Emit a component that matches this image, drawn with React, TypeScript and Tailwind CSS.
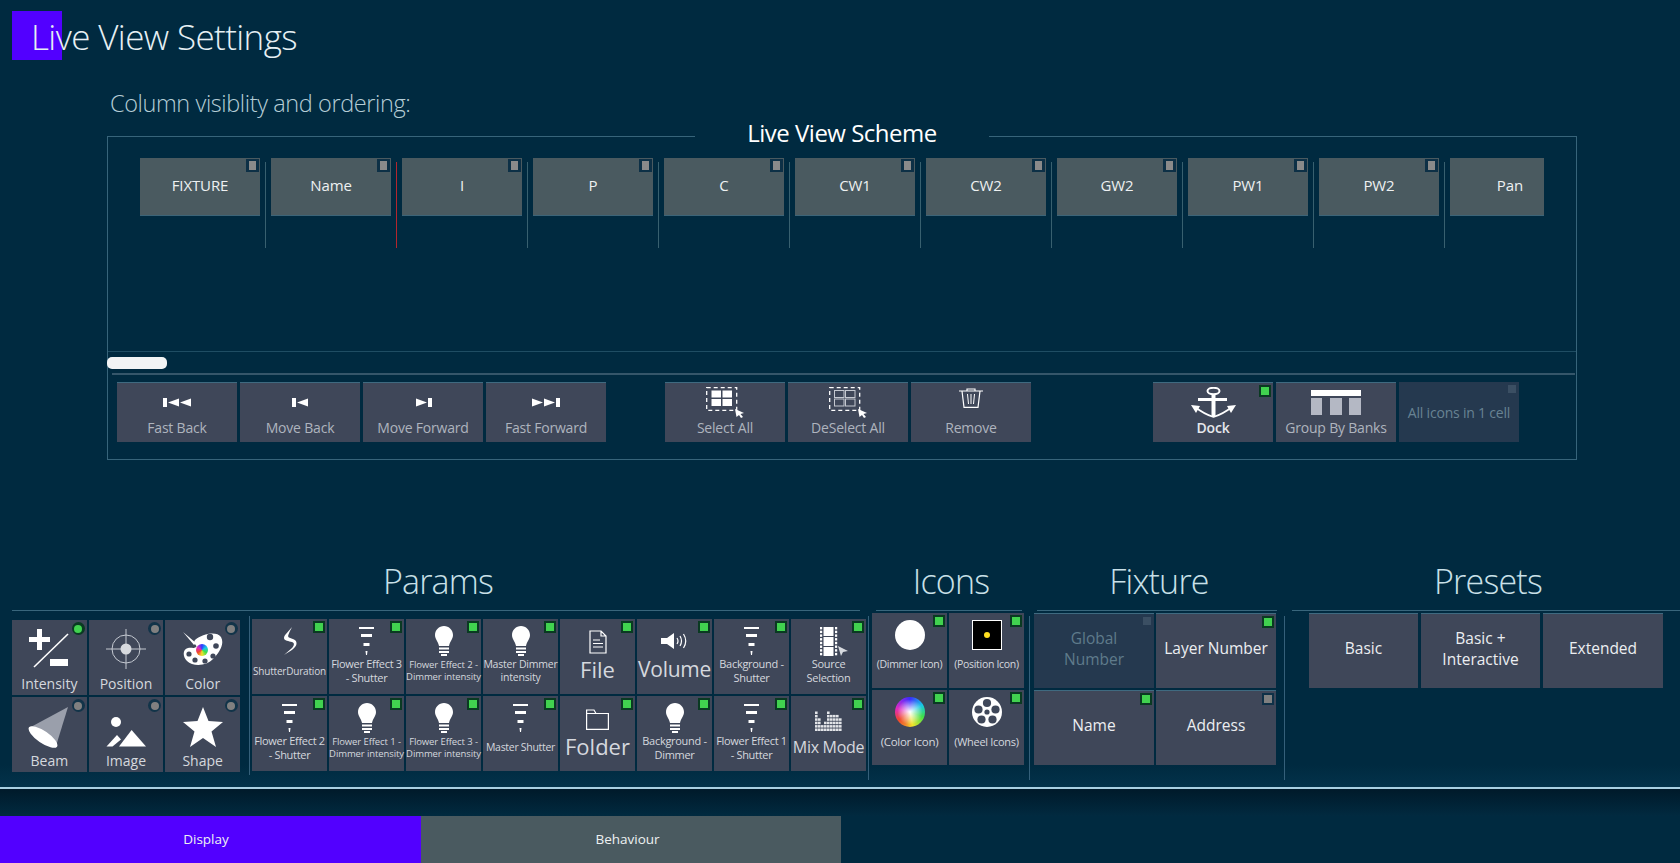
import type { ReactNode } from "react";

type Mark = "on" | "off" | "dim" | "none";

const COLUMNS = ["FIXTURE", "Name", "I", "P", "C", "CW1", "CW2", "GW2", "PW1", "PW2", "Pan"];

function SquareMark({ mark }: { mark: Mark }) {
    if (mark === "none") return null;
    if (mark === "dim") {
        return <span className="absolute top-[3px] right-[3px] w-[8px] h-[8px] bg-[#3b4f63]" />;
    }
    return (
        <span className={`absolute top-[2px] right-[2px] w-[12px] h-[12px] flex items-center justify-center ${mark === "on" ? "bg-[#0a3a22]" : "bg-[#0f3148]"}`}>
            <span className={`w-[8px] h-[8px] ${mark === "on" ? "bg-[#41d24f]" : "bg-[#808080]"}`} />
        </span>
    );
}

function RoundMark({ on }: { on: boolean }) {
    return (
        <span className={`absolute top-[2px] right-[2px] w-[13px] h-[13px] rounded-full flex items-center justify-center ${on ? "bg-[#0a3a22]" : "bg-[#123449]"}`}>
            <span className={`w-[8px] h-[8px] rounded-full ${on ? "bg-[#41d24f]" : "bg-[#808080]"}`} />
        </span>
    );
}

/* ---------- icons ---------- */

const Skip = ({ back, double }: { back?: boolean; double?: boolean }) => (
    <svg width={double ? 28 : 17} height="9" viewBox={double ? "0 0 28 9" : "0 0 17 9"} className={back ? "" : "-scale-x-100"} fill="#fff">
        <rect x="0" y="0" width="4" height="9" />
        <polygon points="5,4.5 16,0.5 16,8.5" />
        {double && <polygon points="17,4.5 28,0.5 28,8.5" />}
    </svg>
);

const SelectGrid = ({ filled }: { filled?: boolean }) => (
    <svg width="38" height="31" viewBox="0 0 38 31" fill="none">
        <rect x="0.7" y="0.7" width="30" height="22.6" stroke="#fff" strokeWidth="1.3" strokeDasharray="4 3" />
        {[[5.5, 3.5], [16.5, 3.5], [5.5, 12], [16.5, 12]].map(([x, y]) => (
            <rect key={`${x}-${y}`} x={x} y={y} width="9.5" height="7" fill={filled ? "#fff" : "none"} stroke={filled ? "none" : "#c4c8d0"} />
        ))}
        <path d="M29 22 L38 26 L34.5 27 L37 30 L35 31 L33 28 L30.5 30 Z" fill="#fff" />
    </svg>
);

const Trash = () => (
    <svg width="24" height="20" viewBox="0 0 24 20" fill="none" stroke="#fff" className="mb-[9px]">
        <path d="M0 3 H24 M8 3 V1 H16 V3" strokeWidth="1.2" />
        <path d="M3 3 L5 19.4 H19 L21 3" strokeWidth="1.2" />
        <path d="M8.5 6 L9.5 16 M12 6 V16 M15.5 6 L14.5 16" strokeWidth="1" />
    </svg>
);

const Anchor = () => (
    <svg width="45" height="31" viewBox="0 0 45 31" fill="none" stroke="#fff">
        <ellipse cx="22.5" cy="4" rx="6" ry="3.2" strokeWidth="2" />
        <rect x="7" y="11" width="29" height="3" fill="#fff" stroke="none" />
        <rect x="20.5" y="7" width="4" height="23" fill="#fff" stroke="none" />
        <path d="M4 20 Q13 27 22.5 30 Q32 27 41 20" strokeWidth="1.6" />
        <polygon points="0,18 9,19 5,26" fill="#fff" stroke="none" />
        <polygon points="45,18 36,19 40,26" fill="#fff" stroke="none" />
    </svg>
);

const Banks = () => (
    <svg width="50" height="25" viewBox="0 0 50 25">
        <rect x="0" y="0" width="50" height="6" fill="#fff" />
        <rect x="0" y="8" width="11" height="17" fill="#b4b8c4" />
        <rect x="19" y="8" width="12" height="17" fill="#b4b8c4" />
        <rect x="38" y="8" width="12" height="17" fill="#b4b8c4" />
    </svg>
);

const PlusMinus = () => (
    <svg width="40" height="40" viewBox="0 0 40 40" fill="#fff">
        <rect x="0" y="8" width="21" height="5" />
        <rect x="8" y="0" width="5" height="21" />
        <rect x="21" y="30" width="18" height="7" />
        <line x1="39" y1="5" x2="5" y2="38" stroke="#fff" strokeWidth="1.6" />
    </svg>
);

const Crosshair = () => (
    <svg width="40" height="40" viewBox="0 0 40 40" fill="none" stroke="#c4c9d1">
        <circle cx="20" cy="20" r="14" />
        <path d="M0 20 H40 M20 0 V40" />
        <circle cx="20" cy="20" r="5.5" fill="#d6d9de" stroke="none" />
    </svg>
);

const Palette = () => (
    <div className="relative w-[40px] h-[36px]">
        <svg width="40" height="36" viewBox="0 0 40 36">
            <path d="M0 1 L13 12 L11 14 Z" fill="#fff" />
            <path d="M12 9 C20 2 34 0 38 6 C42 13 36 22 30 28 C24 35 10 36 4 30 C-1 25 0 18 5 17 C9 16 10 18 13 16 C15 14 9 13 12 9 Z" fill="#fff" />
            {[[27, 6, 3.2], [33, 15, 2.8], [30, 25, 2.6], [22, 30, 2.6], [12, 29, 2.6], [6, 23, 2.6]].map(([x, y, r]) => (
                <circle key={`${x}-${y}`} cx={x} cy={y} r={r} fill="#3f4759" />
            ))}
        </svg>
        <span className="absolute left-[13px] top-[13px] w-[12px] h-[12px] rounded-full bg-[conic-gradient(#2e3bff,#19c8e6,#3fe04a,#f2e52b,#f0462c,#e02bc0,#2e3bff)]" />
    </div>
);

const Beam = () => (
    <svg width="42" height="44" viewBox="0 0 42 44" className="shrink-0">
        <polygon points="40,3 1,24 28,42" fill="#9a9fab" />
        <ellipse cx="15" cy="33" rx="17" ry="6" transform="rotate(34.5 15 33)" fill="#fff" />
    </svg>
);

const Picture = () => (
    <svg width="40" height="30" viewBox="0 0 40 30" fill="#fff" className="mt-[13px]">
        <circle cx="10" cy="5" r="5" />
        <polygon points="0.5,29.6 11,18 15,22.5 6.5,29.6" />
        <polygon points="13,29.6 25.6,13 40,29.6" />
    </svg>
);

const Star = () => (
    <svg width="40" height="40" viewBox="0 0 40 40" fill="#fff" className="mt-[2px]">
        <polygon points="20,0 25.5,14 40,15 28.5,24.5 33,40 20,31 7,40 11.5,24.5 0,15 14.5,14" />
    </svg>
);

const Bolt = () => (
    <svg width="14" height="28" viewBox="0 0 14 28" fill="#fff">
        <path d="M9 0 C6 4 1 8 1 11 C1 14 6 14 9 15 C12 16 11 19 9 21 L1 28 C6 25 13 21 13.5 17 C14 12 9 12 6 10.5 C4 9.5 6 6 9 0 Z" />
    </svg>
);

const Flower = () => (
    <svg width="15" height="28" viewBox="0 0 15 28" fill="#fff">
        <rect x="0" y="0" width="15" height="2" />
        <rect x="2" y="7" width="11" height="3" />
        <rect x="4.5" y="16" width="6" height="3" />
        <polygon points="6.5,24 8.5,24 8,28 7,28" />
    </svg>
);

const Bulb = () => (
    <svg width="18" height="30" viewBox="0 0 18 30" fill="#fff">
        <path d="M9 0 C4 0 0 4 0 9 C0 13 3 15 4 20 H14 C15 15 18 13 18 9 C18 4 14 0 9 0 Z" />
        <rect x="4" y="21.5" width="10" height="2" />
        <rect x="4" y="25" width="10" height="2" />
        <rect x="6" y="28" width="6" height="2" />
    </svg>
);

const FileIcon = () => (
    <svg width="18" height="24" viewBox="0 0 18 24" fill="none" stroke="#fff" strokeWidth="1.2" className="mt-[2px]">
        <path d="M1 1 H12 L17 6 V23 H1 Z M12 1 V6 H17" />
        <path d="M4 10 H11 M4 13.5 H14 M4 17 H14" />
    </svg>
);

const Speaker = () => (
    <svg width="27" height="16" viewBox="0 0 27 16" fill="none" stroke="#fff" className="mb-[1px]">
        <polygon points="0,5 6,5 13,0 13,16 6,11 0,11" fill="#fff" stroke="none" />
        <path d="M16 5 Q18 8 16 11 M19 3 Q22 8 19 13 M22.5 1 Q27 8 22.5 15" strokeWidth="1.2" />
    </svg>
);

const Film = () => (
    <svg width="28" height="29" viewBox="0 0 28 29" fill="#fff" className="ml-[11px]">
        <rect x="3.5" y="0" width="10" height="9" />
        <rect x="3.5" y="10" width="10" height="9" />
        <rect x="3.5" y="20" width="10" height="9" />
        {[0, 1, 2, 3, 4, 5, 6, 7].map((i) => (
            <g key={i}>
                <rect x="0" y={i * 3.7} width="2.2" height="2.4" />
                <rect x="15" y={i * 3.7} width="2.2" height="2.4" />
            </g>
        ))}
        <polygon points="18,19 28,24 23,25 21,29" fill="#d8dbe0" />
    </svg>
);

const Folder = () => (
    <svg width="23" height="21" viewBox="0 0 23 21" fill="none" stroke="#fff" strokeWidth="1.2" className="mt-[3px]">
        <path d="M0.6 20.4 V1 H8 L10 4.5 H22.4 V20.4 Z M0.6 4.5 H10" />
    </svg>
);

const EQ_LEVELS = [6, 4, 2, 3, 6, 5, 5, 5, 4];

const Equalizer = () => (
    <svg width="27" height="22" viewBox="0 0 27 22" fill="#e2e4e8" className="mt-[3px]">
        {EQ_LEVELS.map((n, col) =>
            Array.from({ length: n }).map((_, row) => (
                <rect key={`${col}-${row}`} x={col * 3} y={19.5 - row * 3.4} width="2.6" height="2.5" />
            )),
        )}
    </svg>
);

const PositionIcon = () => (
    <div className="w-[30px] h-[30px] bg-black border border-white flex items-center justify-center">
        <span className="w-[6px] h-[6px] rounded-full bg-[#ffdf20]" />
    </div>
);

const Wheel = () => (
    <svg width="30" height="30" viewBox="0 0 30 30">
        <circle cx="15" cy="15" r="15" fill="#fff" />
        {[[15, 6], [23.5, 12.5], [20.5, 22.5], [9.5, 22.5], [6.5, 12.5]].map(([x, y]) => (
            <circle key={`${x}-${y}`} cx={x} cy={y} r="4.1" fill="#3f4759" />
        ))}
        <circle cx="15" cy="15" r="2.6" fill="#3f4759" />
    </svg>
);

/* ---------- buttons ---------- */

function ColumnItem({ name }: { name: string }) {
    return (
        <div className="w-[131px] shrink-0 flex items-start">
            <div className="relative w-[120px] h-[58px] shrink-0 bg-[#4a5a60] border-b border-[#3c6478] pb-[3px] flex items-center justify-center text-[15px] tracking-[-0.1px] text-[#eef1f2]">
                {name}
                <span className="absolute top-[1px] right-[1px] w-[13px] h-[13px] bg-[#0d3046] flex items-center justify-center">
                    <span className="w-[7px] h-[9px] bg-[#8a8a8a]" />
                </span>
            </div>
            <div className={`ml-[5px] mt-[4px] w-px h-[86px] ${name === "Name" ? "bg-[#b3262e]" : "bg-[#38606f]"}`} />
        </div>
    );
}

function ToolButton({ label, icon, mark = "none", bold }: { label: string; icon: ReactNode; mark?: Mark; bold?: boolean }) {
    return (
        <div className="relative w-[120px] h-[60px] bg-[#3f4759] border-t border-[#3f6a80] flex flex-col items-center pt-[4px]">
            <div className="h-[31px] flex items-center justify-center">{icon}</div>
            <div className={`h-[18px] flex items-center text-[14px] tracking-[-0.2px] ${bold ? "font-semibold text-[#e6e8ec]" : "text-[#aeb4be]"}`}>{label}</div>
            <SquareMark mark={mark} />
        </div>
    );
}

function Tile({ label, icon, text, on, round, tall }: { label: string; icon: ReactNode; text: string; on?: boolean; round?: boolean; tall?: boolean }) {
    return (
        <div className="relative h-[75px] bg-[#3f4759] flex flex-col items-center pt-[7px]">
            <div className={`${tall ? "h-[43px]" : "h-[30px]"} flex items-center justify-center shrink-0`}>{icon}</div>
            <div className={`h-[30px] w-full flex items-center justify-center text-center whitespace-pre text-[#d5d8de] ${tall ? "mt-[1px]" : ""} ${text}`}>{label}</div>
            {round ? <RoundMark on={!!on} /> : <SquareMark mark="on" />}
        </div>
    );
}

function TextTile({ label, mark = "none", dim }: { label: string; mark?: Mark; dim?: boolean }) {
    return (
        <div className={`relative h-[75px] border-t border-[#3f6a80] pb-[5px] flex items-center justify-center text-center text-[15.5px] leading-[21px] whitespace-pre-line ${dim ? "bg-[#25394f] text-[#5f7b8b]" : "bg-[#3f4759] text-[#eceef1]"}`}>
            {label}
            <SquareMark mark={mark} />
        </div>
    );
}

const Heading = ({ title, className }: { title: string; className: string }) => (
    <div className={`h-[51px] pb-[8px] pl-[4px] border-b border-[#39667c] flex items-center justify-center text-[34px] font-light tracking-[-0.8px] text-[#c9e0e8] ${className}`}>{title}</div>
);

const Sep = () => <div className="mt-[56px] w-px h-[164px] bg-[#35607a] shrink-0" />;

const SMALL = "text-[9.5px] leading-[12px] tracking-[-0.1px]";
const MID = "text-[11px] leading-[14px] tracking-[-0.3px]";
const BIG = "text-[22px] pb-[4px]";

export default function App() {
    return (
        <div className="relative w-[1680px] h-[863px] overflow-hidden bg-[#002a40] font-['Open_Sans',sans-serif] flex flex-col">
            {/* focus highlight behind the title */}
            <div className="absolute left-[12px] top-[11px] w-[50px] h-[49px] bg-[#5200ff]" />

            <div className="relative h-[76px] pb-[2px] pl-[31px] flex items-center text-[35px] font-light tracking-[-0.6px] text-[#e6f0f4]">Live View Settings</div>
            <div className="mt-[14px] ml-[110px] h-[30px] pb-[2px] flex items-center text-[23.5px] font-light tracking-[-0.4px] text-[#b5cdd6]">Column visiblity and ordering:</div>

            <fieldset className="mt-px ml-[107px] w-[1470px] h-[339px] border border-[#37647a]">
                <legend className="mx-auto w-[294px] h-[30px] pb-[7px] flex items-center justify-center text-[24px] tracking-[-0.5px] text-white">Live View Scheme</legend>
                <div className="pt-[7px] h-[201px] border-b border-[#1f4d63]">
                    <div className="ml-[32px] w-[1404px] flex overflow-hidden">
                        {COLUMNS.map((c) => (
                            <ColumnItem key={c} name={c} />
                        ))}
                    </div>
                </div>
                <div className="mt-[5px] -ml-px w-[60px] h-[12px] rounded-[5px] bg-[#f2f4f5]" />
                <div className="mt-[4px] ml-[4px] mr-px h-[2px] bg-[#35566a]" />
                <div className="mt-[7px] ml-[9px] flex items-start">
                    <div className="flex gap-[3px]">
                        <ToolButton label="Fast Back" icon={<Skip back double />} />
                        <ToolButton label="Move Back" icon={<Skip back />} />
                        <ToolButton label="Move Forward" icon={<Skip />} />
                        <ToolButton label="Fast Forward" icon={<Skip double />} />
                    </div>
                    <div className="ml-[59px] flex gap-[3px]">
                        <ToolButton label="Select All" icon={<SelectGrid filled />} />
                        <ToolButton label="DeSelect All" icon={<SelectGrid />} />
                        <ToolButton label="Remove" icon={<Trash />} />
                    </div>
                    <div className="ml-[122px] flex gap-[3px]">
                        <ToolButton label="Dock" icon={<Anchor />} mark="on" bold />
                        <ToolButton label="Group By Banks" icon={<Banks />} />
                        <div className="relative w-[120px] h-[60px] bg-[#25394f] flex items-center justify-center text-[14px] tracking-[-0.2px] text-[#688393]">
                            All icons in 1 cell
                            <SquareMark mark="dim" />
                        </div>
                    </div>
                </div>
            </fieldset>

            <div className="mt-[100px] h-[227px] flex items-start bg-gradient-to-b from-[#002a40] from-[90%] to-[#03324a]">
                <div className="ml-[12px] w-[856px] shrink-0">
                    <Heading title="Params" className="w-[848px]" />
                    <div className="flex items-start">
                        <div className="mt-[9px] w-[228px] grid grid-cols-3 gap-[2px]">
                            <Tile label="Intensity" tall round on icon={<PlusMinus />} text="text-[14px]" />
                            <Tile label="Position" tall round icon={<Crosshair />} text="text-[14px]" />
                            <Tile label="Color" tall round icon={<Palette />} text="text-[14px]" />
                            <Tile label="Beam" tall round icon={<Beam />} text="text-[14px]" />
                            <Tile label="Image" tall round icon={<Picture />} text="text-[14px]" />
                            <Tile label="Shape" tall round icon={<Star />} text="text-[14px]" />
                        </div>
                        <div className="ml-[9px] mt-[5px] w-px h-[159px] bg-[#35607a] shrink-0" />
                        <div className="ml-[2px] mt-[8px] grid grid-cols-[repeat(8,75px)] gap-[2px]">
                            <Tile label="ShutterDuration" icon={<Bolt />} text="text-[10px] tracking-[-0.2px]" />
                            <Tile label={"Flower Effect 3\n- Shutter"} icon={<Flower />} text={MID} />
                            <Tile label={"Flower Effect 2 -\nDimmer intensity"} icon={<Bulb />} text={SMALL} />
                            <Tile label={"Master Dimmer\nintensity"} icon={<Bulb />} text="text-[10.5px] leading-[13px] tracking-[-0.2px]" />
                            <Tile label="File" icon={<FileIcon />} text={BIG} />
                            <Tile label="Volume" icon={<Speaker />} text="text-[21px] tracking-[-0.3px] pb-[3px]" />
                            <Tile label={"Background -\nShutter"} icon={<Flower />} text={MID} />
                            <Tile label={"Source\nSelection"} icon={<Film />} text={MID} />
                            <Tile label={"Flower Effect 2\n- Shutter"} icon={<Flower />} text={MID} />
                            <Tile label={"Flower Effect 1 -\nDimmer intensity"} icon={<Bulb />} text={SMALL} />
                            <Tile label={"Flower Effect 3 -\nDimmer intensity"} icon={<Bulb />} text={SMALL} />
                            <Tile label="Master Shutter" icon={<Flower />} text="text-[10.5px] tracking-[-0.3px]" />
                            <Tile label="Folder" icon={<Folder />} text={BIG} />
                            <Tile label={"Background -\nDimmer"} icon={<Bulb />} text={MID} />
                            <Tile label={"Flower Effect 1\n- Shutter"} icon={<Flower />} text={MID} />
                            <Tile label="Mix Mode" icon={<Equalizer />} text="text-[16px] tracking-[-0.3px] pb-[2px]" />
                        </div>
                    </div>
                </div>
                <Sep />

                <div className="w-[160px] shrink-0">
                    <Heading title="Icons" className="ml-[7px] w-[146px]" />
                    <div className="ml-[3px] mt-[2px] w-[152px] grid grid-cols-2 gap-[2px]">
                        <Tile label="(Dimmer Icon)" icon={<div className="w-[30px] h-[30px] rounded-full bg-white" />} text="text-[10.5px] tracking-[-0.3px]" />
                        <Tile label="(Position Icon)" icon={<PositionIcon />} text="text-[10.5px] tracking-[-0.3px]" />
                        <Tile label="(Color Icon)" icon={<div className="w-[30px] h-[30px] rounded-full bg-[radial-gradient(circle,#ffffff_0%,#ffffff00_60%),conic-gradient(#3a2bff,#19c8e6_60deg,#3fe04a_110deg,#f2e52b_170deg,#f0862c_200deg,#f0462c_235deg,#e02bc0_285deg,#7a2bf0_330deg,#3a2bff)]" />} text="text-[11.5px] tracking-[-0.3px]" />
                        <Tile label="(Wheel Icons)" icon={<Wheel />} text="text-[11px] tracking-[-0.3px]" />
                    </div>
                </div>
                <Sep />

                <div className="w-[254px] shrink-0">
                    <Heading title="Fixture" className="ml-[7px] w-[240px]" />
                    <div className="ml-[4px] mt-[2px] w-[242px] grid grid-cols-2 gap-[2px]">
                        <TextTile label={"Global\nNumber"} mark="dim" dim />
                        <TextTile label="Layer Number" mark="on" />
                        <TextTile label="Name" mark="on" />
                        <TextTile label="Address" mark="off" />
                    </div>
                </div>
                <Sep />

                <div className="flex-1">
                    <Heading title="Presets" className="ml-[7px]" />
                    <div className="ml-[24px] mt-[2px] grid grid-cols-[109px_119px_120px] gap-[3px]">
                        <TextTile label="Basic" />
                        <TextTile label={"Basic +\nInteractive"} />
                        <TextTile label="Extended" />
                    </div>
                </div>
            </div>

            <div className="h-[2px] bg-[#a9d0e2]" />
            <div className="h-[27px] bg-gradient-to-b from-[#001a2a] to-[#012a40]" />
            <div className="flex h-[47px] text-[13.5px] text-[#eef1f2]">
                <div className="w-[421px] pr-[9px] bg-[#5200ff] flex items-center justify-center">Display</div>
                <div className="w-[420px] pr-[7px] bg-[#4a5a60] flex items-center justify-center">Behaviour</div>
            </div>
        </div>
    );
}
